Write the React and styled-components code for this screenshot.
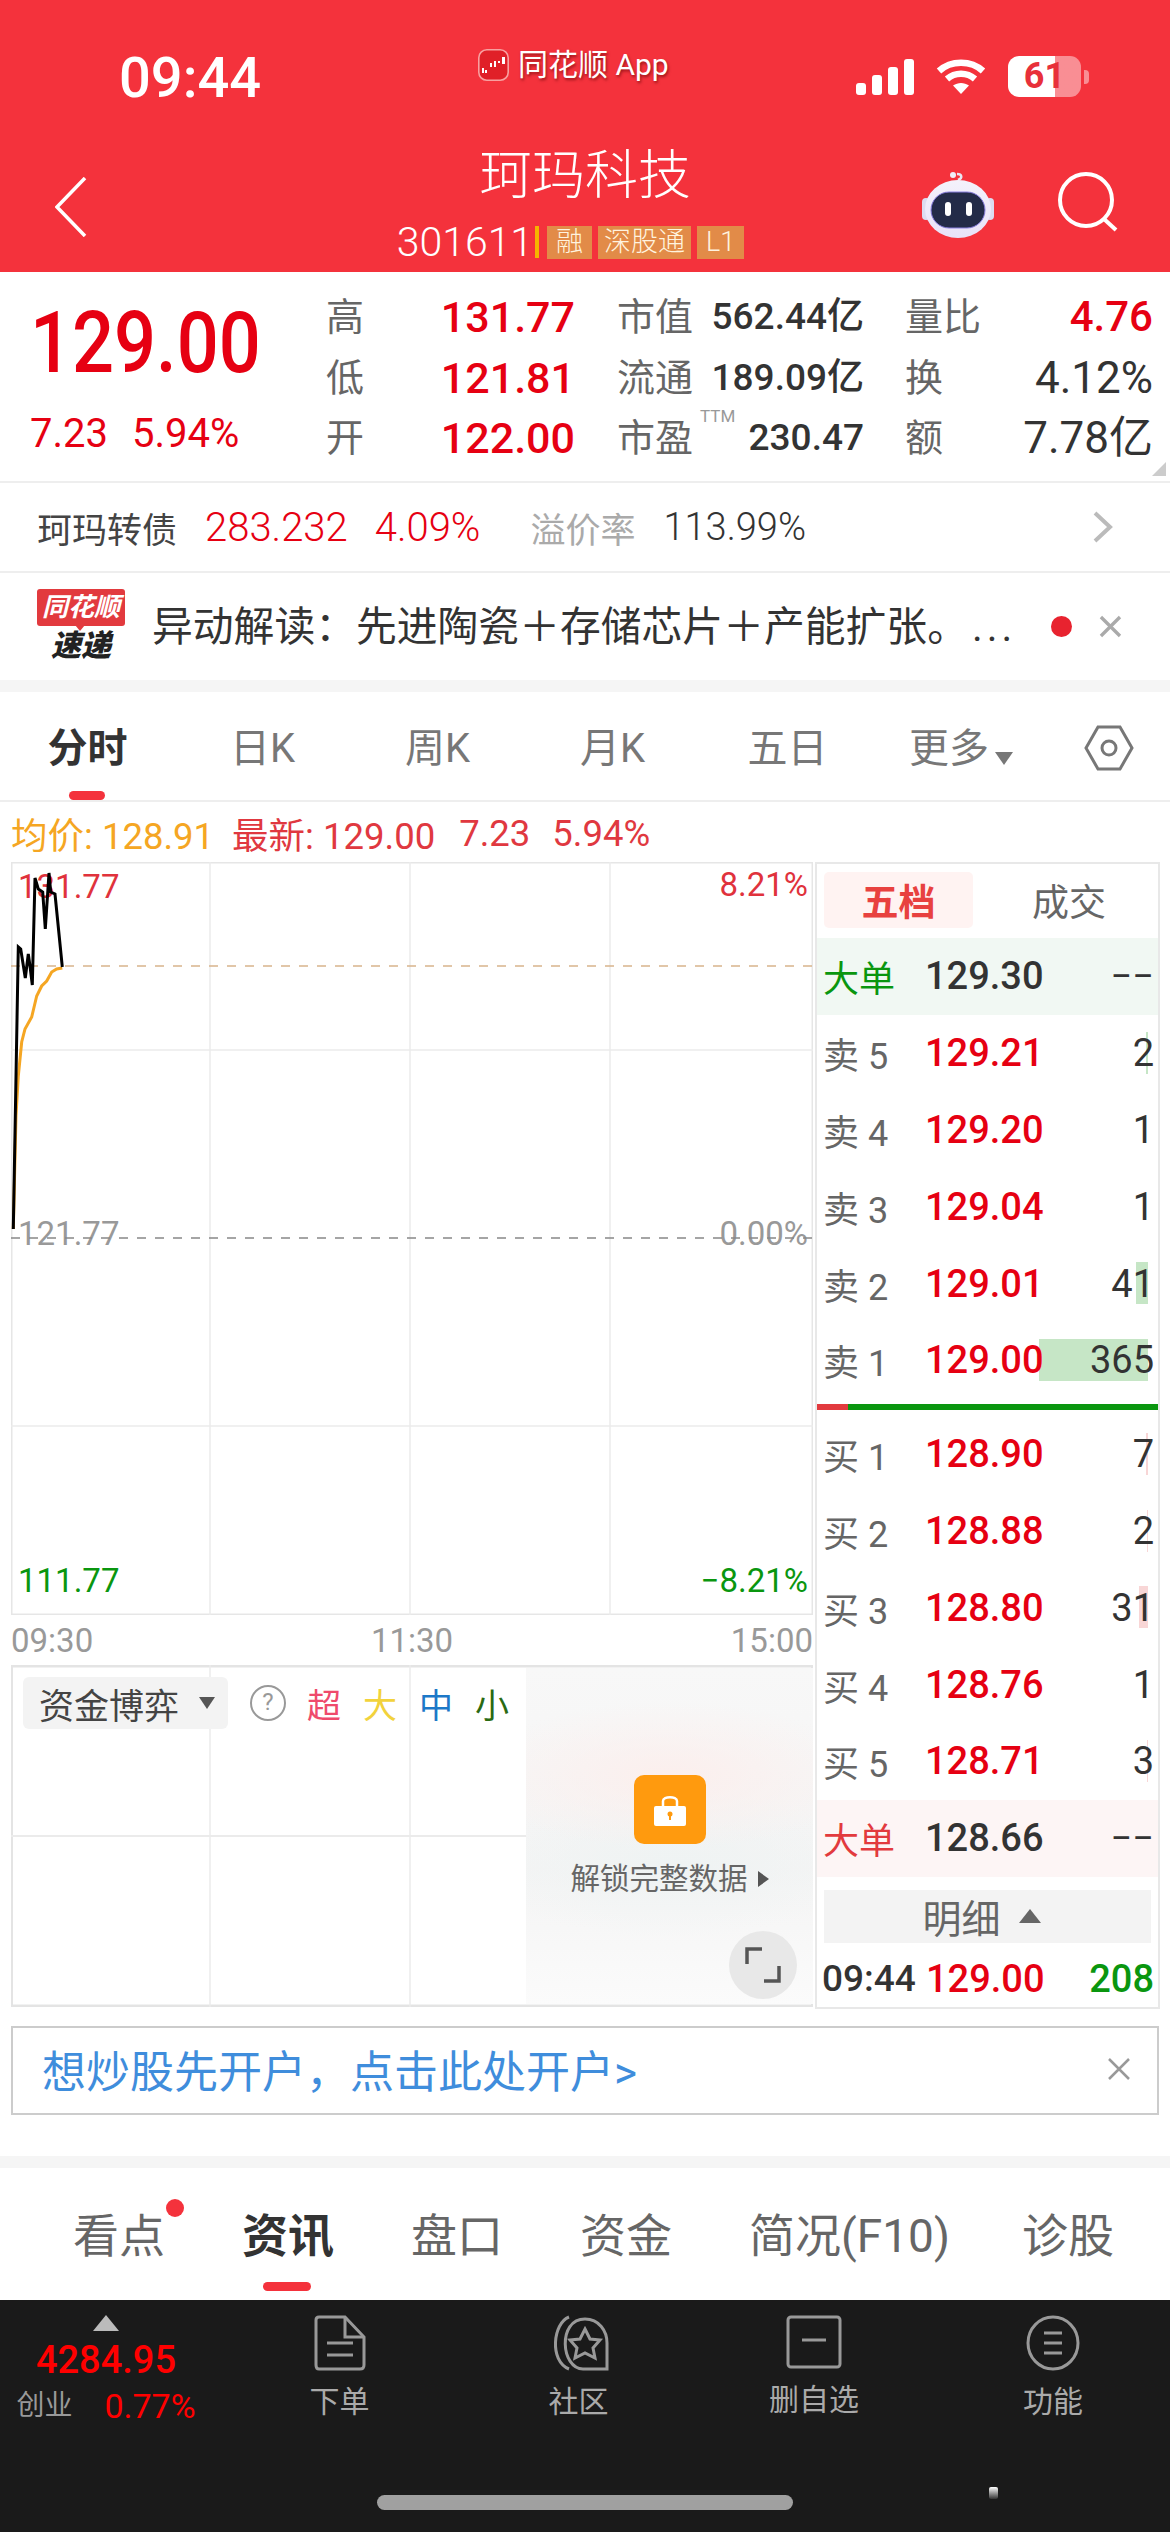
import React from 'react';
import styled, { createGlobalStyle } from 'styled-components';

const FONT = `Roboto, "Noto Sans CJK SC", sans-serif`;
const RED = '#e60012';
const GREEN = '#0a960f';

const GlobalStyle = createGlobalStyle`
  html, body { margin: 0; padding: 0; background: #fff; }
  body { font-family: ${FONT}; }
  * { box-sizing: border-box; }
`;

const Page = styled.div`
  width: 1170px;
  height: 2532px;
  display: flex;
  flex-direction: column;
  overflow: hidden;
  background: #fff;
  color: #333;
`;

/* red header */
const Header = styled.header`
  height: 272px;
  flex: none;
  background: #f4323c;
  color: #fff;
  display: flex;
  flex-direction: column;
`;

const StatusBar = styled.div`
  height: 134px;
  padding: 47px 80px 0 119px;
  display: flex;
  align-items: flex-start;
`;

const Clock = styled.div`
  width: 359px;
  font-size: 56px;
  line-height: 62px;
  font-weight: 500;
`;

const AppBadge = styled.div`
  display: flex;
  align-items: center;
  gap: 9px;
  width: 378px;
  margin-top: 1px;
  font-size: 30px;
  line-height: 34px;
  text-shadow: 1px 2px 3px rgba(90, 0, 0, 0.6);
`;

const StatusIcons = styled.div`
  display: flex;
  align-items: center;
  gap: 22px;
  margin-top: 9px;
`;

const Battery = styled.div`
  position: relative;
  width: 73px;
  height: 41px;
  border-radius: 11px;
  overflow: hidden;
  background: linear-gradient(90deg, #fff 0 64%, rgba(255, 255, 255, 0.45) 64% 100%);
  color: #e8303a;
  font-size: 36px;
  font-weight: 700;
  line-height: 41px;
  text-align: center;
`;

const BatteryTip = styled.div`
  width: 5px;
  height: 14px;
  margin-left: -19px;
  border-radius: 0 4px 4px 0;
  background: rgba(255, 255, 255, 0.45);
`;

const NavBar = styled.div`
  position: relative;
  flex: 1;
  display: flex;
  justify-content: space-between;
  padding: 43px 51px 0 55px;
`;

const NavRight = styled.div`
  display: flex;
  gap: 63px;
  margin-top: -5px;
`;

const TitleBlock = styled.div`
  position: absolute;
  left: 0;
  right: 0;
  top: 8px;
  display: flex;
  flex-direction: column;
  align-items: center;
`;

const Title = styled.div`
  font-size: 53px;
  line-height: 68px;
  font-weight: 300;
`;

const CodeLine = styled.div`
  display: flex;
  align-items: center;
  height: 34px;
  margin-top: 15px;
  margin-left: -29px;
  gap: 6px;
`;

const Code = styled.span`
  font-size: 41px;
  font-weight: 300;
  border-right: 4px solid #f5b400;
  line-height: 32px;
  padding-right: 2px;
  margin-right: 2px;
`;

const Tag = styled.span`
  background: #e28b48;
  color: #fff3df;
  height: 33px;
  padding: 0 ${(p) => p.$pad || 9}px;
  font-size: 27px;
  line-height: 33px;
  font-weight: 300;
`;

/* quote block */
const Quote = styled.section`
  position: relative;
  height: 211px;
  flex: none;
  display: flex;
  border-bottom: 2px solid #eee;
`;

const QuoteLeft = styled.div`
  width: 326px;
  padding-left: 30px;
  display: flex;
  flex-direction: column;
`;

const BigPrice = styled.div`
  font-size: 85px;
  font-weight: 500;
  line-height: 80px;
  color: ${RED};
  margin-top: 31px;
  width: 240px;
  white-space: nowrap;
  transform: scaleX(0.87);
  transform-origin: left center;
`;

const ChangeLine = styled.div`
  display: flex;
  gap: 24px;
  margin-top: 29px;
  color: ${RED};
  font-size: 40px;
  line-height: 44px;
`;

const StatGrid = styled.div`
  display: grid;
  grid-template-columns: 60px 189px 42px 80px 167px 41px 80px 168px;
  grid-auto-rows: 60.5px;
  padding-top: 15px;
  align-items: center;
`;

const StatLabel = styled.div`
  position: relative;
  grid-column: ${(p) => p.$col};
  font-size: 38px;
  line-height: 44px;
  color: #666;
  white-space: nowrap;
`;

const StatValue = styled.div`
  grid-column: ${(p) => p.$col};
  text-align: right;
  font-size: ${(p) => p.$size || 38}px;
  font-weight: ${(p) => p.$weight || 400};
  line-height: 44px;
  color: ${(p) => p.$color || '#333'};
  white-space: nowrap;
`;

const Ttm = styled.span`
  position: absolute;
  left: 83px;
  top: -9px;
  font-size: 17px;
  line-height: 18px;
  color: #999;
`;

const CornerMark = styled.div`
  position: absolute;
  right: 4px;
  bottom: 5px;
  width: 0;
  height: 0;
  border-left: 14px solid transparent;
  border-bottom: 14px solid #ccc;
`;

/* bond row */
const BondRow = styled.section`
  height: 90px;
  flex: none;
  display: flex;
  align-items: center;
  padding: 0 57px 0 37px;
  font-size: 36px;
  border-bottom: 2px solid #eee;
`;

const BondName = styled.span`
  width: 168px;
  font-size: 35px;
  color: #444;
`;

const BondNum = styled.span`
  color: ${(p) => p.$color || RED};
  font-size: ${(p) => p.$size || 40}px;
  font-weight: 300;
  margin-right: ${(p) => p.$gap || 0}px;
`;

const BondLabel = styled.span`
  color: #aaa;
  font-size: 35px;
  margin-right: 28px;
`;

const Spacer = styled.div`
  flex: 1;
`;

/* news row */
const NewsRow = styled.section`
  height: 107px;
  flex: none;
  display: flex;
  align-items: center;
  padding: 0 48px 0 37px;
`;

const NewsBadge = styled.div`
  width: 88px;
  margin-right: 27px;
  margin-top: -2px;
  display: flex;
  flex-direction: column;
  align-items: center;
`;

const NewsBadgeTop = styled.div`
  position: relative;
  width: 88px;
  height: 37px;
  background: #e23a3e;
  color: #fff;
  border-radius: 3px;
  font-size: 26px;
  line-height: 36px;
  font-weight: 700;
  font-style: italic;
  text-align: center;
  white-space: nowrap;
  &::after {
    content: '';
    position: absolute;
    left: 38px;
    bottom: -5px;
    border-left: 5px solid transparent;
    border-right: 5px solid transparent;
    border-top: 6px solid #e23a3e;
  }
`;

const NewsBadgeBottom = styled.div`
  font-size: 30px;
  line-height: 32px;
  margin-top: 4px;
  font-weight: 900;
  font-style: italic;
  color: #222;
`;

const NewsText = styled.div`
  width: 868px;
  font-size: 40.8px;
  line-height: 50px;
  color: #333;
  white-space: nowrap;
`;

const NewsDots = styled.span`
  letter-spacing: 4px;
  margin-left: 4px;
`;

const NewsDot = styled.div`
  width: 21px;
  height: 21px;
  border-radius: 50%;
  background: #e8232f;
  margin-left: 35px;
  margin-right: 27px;
`;

const GreyStrip = styled.div`
  height: ${(p) => p.$h}px;
  flex: none;
  margin-top: ${(p) => p.$top || 0}px;
  background: #f5f5f5;
`;

/* period tabs */
const PeriodTabs = styled.nav`
  height: 110px;
  flex: none;
  display: grid;
  grid-template-columns: repeat(5, 175px) 184px 1fr;
  border-bottom: 2px solid #eee;
`;

const PeriodTab = styled.div`
  position: relative;
  display: flex;
  justify-content: center;
  align-items: flex-start;
  padding-top: 30px;
  padding-right: ${(p) => p.$padRight || 0}px;
  font-size: 40px;
  line-height: 54px;
  font-weight: ${(p) => (p.$active ? 700 : 400)};
  color: ${(p) => (p.$active ? '#333' : '#777')};
`;

const TabMark = styled.i`
  position: absolute;
  left: ${(p) => p.$left}px;
  bottom: 0;
  width: ${(p) => p.$width}px;
  height: 9px;
  border-radius: 5px;
  background: #f4323c;
`;

const MoreArrow = styled.i`
  align-self: center;
  margin: 0 0 6px 6px;
  border-left: 9px solid transparent;
  border-right: 9px solid transparent;
  border-top: 13px solid #777;
`;

const SettingCell = styled.div`
  padding: 33px 0 0 25px;
`;

/* info line */
const InfoLine = styled.div`
  height: 60px;
  flex: none;
  display: flex;
  align-items: center;
  padding: 2px 0 0 11px;
  font-size: 36.5px;
  color: #e03840;
`;

const InfoPart = styled.span`
  color: ${(p) => p.$color || 'inherit'};
  margin-right: ${(p) => p.$gap || 0}px;
  white-space: nowrap;
`;

/* chart + order book */
const Board = styled.div`
  height: 1147px;
  flex: none;
  display: flex;
  padding-left: 11px;
`;

const ChartColumn = styled.div`
  width: 802px;
  display: flex;
  flex-direction: column;
`;

const ChartFrame = styled.div`
  position: relative;
  width: 802px;
  height: ${(p) => p.$h}px;
  flex: none;
  overflow: hidden;
`;

const ChartSvg = styled.svg`
  position: absolute;
  left: 0;
  top: 0;
  display: block;
`;

const ChartLabel = styled.span`
  position: absolute;
  ${(p) => (p.$right ? 'right: 5px;' : 'left: 7px;')}
  top: ${(p) => p.$top}px;
  font-size: 33px;
  line-height: 40px;
  color: ${(p) => p.$color};
`;

const Axis = styled.div`
  height: 50px;
  flex: none;
  display: flex;
  justify-content: space-between;
  align-items: center;
  font-size: 33px;
  color: #999;
`;

const FundToolbar = styled.div`
  position: absolute;
  left: 12px;
  top: 12px;
  display: flex;
  align-items: center;
`;

const FundSelect = styled.div`
  width: 205px;
  height: 52px;
  padding-left: 16px;
  display: flex;
  align-items: center;
  gap: 20px;
  background: #f3f3f3;
  border-radius: 6px;
  font-size: 35px;
  color: #444;
  white-space: nowrap;
  margin-right: 22px;
`;

const SmallDown = styled.i`
  border-left: 8px solid transparent;
  border-right: 8px solid transparent;
  border-top: 12px solid #555;
`;

const FundKey = styled.span`
  width: 56px;
  text-align: center;
  font-size: 34px;
  color: ${(p) => p.$color};
`;

const HelpMark = styled.div`
  width: 36px;
  height: 36px;
  border-radius: 50%;
  border: 2.5px solid #999;
  color: #999;
  font-size: 24px;
  line-height: 31px;
  text-align: center;
  margin-right: 10px;
`;

const LockOverlay = styled.div`
  position: absolute;
  right: 0;
  top: 3px;
  bottom: 3px;
  width: 287px;
  background:
    radial-gradient(ellipse 70% 22% at 50% 32%, rgba(252, 238, 236, 0.9), transparent),
    radial-gradient(ellipse 70% 22% at 50% 58%, rgba(238, 243, 243, 0.9), transparent),
    linear-gradient(180deg, #f8f8f8, #f4f4f4 60%, #fbfbfb);
  display: flex;
  flex-direction: column;
  align-items: center;
  padding-top: 107px;
`;

const LockBox = styled.div`
  width: 72px;
  height: 69px;
  border-radius: 10px;
  background: #ff9a0e;
  display: flex;
  align-items: center;
  justify-content: center;
`;

const LockText = styled.div`
  display: flex;
  align-items: center;
  gap: 10px;
  margin-top: 17px;
  font-size: 29.5px;
  line-height: 36px;
  color: #666;
  white-space: nowrap;
`;

const SmallRight = styled.i`
  border-top: 8px solid transparent;
  border-bottom: 8px solid transparent;
  border-left: 11px solid #555;
`;

const ExpandBtn = styled.div`
  position: absolute;
  right: 16px;
  bottom: 8px;
  width: 68px;
  height: 68px;
  border-radius: 50%;
  background: #e8e8e8;
  display: flex;
  align-items: center;
  justify-content: center;
`;

/* order book */
const Book = styled.aside`
  width: 345px;
  margin-left: 2px;
  height: 1147px;
  flex: none;
  border: 2px solid #e8e8e8;
  display: flex;
  flex-direction: column;
`;

const BookTabs = styled.div`
  height: 74px;
  flex: none;
  padding: 8px 0 0 7px;
  display: flex;
`;

const BookTab = styled.div`
  width: ${(p) => (p.$active ? 155 : 185)}px;
  height: 56px;
  margin-left: ${(p) => (p.$active ? 0 : 7)}px;
  display: flex;
  justify-content: center;
  align-items: center;
  border-radius: 5px;
  font-size: 37px;
  font-weight: ${(p) => (p.$active ? 700 : 400)};
  color: ${(p) => (p.$active ? '#e8413f' : '#666')};
  background: ${(p) => (p.$active ? '#fff3f2' : 'transparent')};
`;

const BookRow = styled.div`
  position: relative;
  height: 76.8px;
  flex: none;
  display: grid;
  grid-template-columns: 102px 130px 1fr;
  align-items: center;
  padding: 0 4px 0 6px;
  background: ${(p) => p.$bg || 'transparent'};
`;

const RowLabel = styled.span`
  font-size: 36px;
  color: ${(p) => p.$color || '#666'};
  white-space: nowrap;
`;

const RowPrice = styled.span`
  position: relative;
  z-index: 1;
  font-size: 38px;
  font-weight: 500;
  color: ${(p) => p.$color || RED};
`;

const RowQty = styled.span`
  position: relative;
  z-index: 1;
  justify-self: end;
  font-size: 38px;
  color: ${(p) => p.$color || '#333'};
`;

const VolumeBar = styled.i`
  position: absolute;
  right: 10px;
  top: 17px;
  height: 42px;
  background: ${(p) => p.$color};
`;

const SplitBar = styled.div`
  height: 17px;
  flex: none;
  padding-top: 5px;
`;

const SplitFill = styled.div`
  height: 6px;
  background: linear-gradient(90deg, #e23a3e 0 31px, ${GREEN} 31px);
`;

const DetailBtn = styled.div`
  height: 53px;
  margin: 13px 7px 0;
  flex: none;
  background: #f3f3f3;
  display: flex;
  align-items: center;
  justify-content: center;
  gap: 18px;
  font-size: 39px;
  color: #666;
  padding-right: 12px;
`;

const UpMark = styled.i`
  border-left: 11px solid transparent;
  border-right: 11px solid transparent;
  border-bottom: 14px solid #666;
`;

const TradeRow = styled.div`
  flex: 1;
  display: flex;
  align-items: center;
  padding: 8px 4px 0 5px;
  font-weight: 500;
  white-space: nowrap;
`;

const TradeTime = styled.span`
  color: #333;
  width: 104px;
  font-size: 37px;
`;

const TradePrice = styled.span`
  color: ${RED};
  flex: 1;
  font-size: 38px;
`;

const TradeQty = styled.span`
  color: ${GREEN};
  font-size: 38px;
`;

/* open-account banner */
const AccountBanner = styled.div`
  height: 89px;
  flex: none;
  margin: 17px 11px 0;
  border: 2px solid #ccc;
  display: flex;
  align-items: center;
  justify-content: space-between;
  padding: 0 26px 4px 29px;
  font-size: 44px;
  color: #3f8ddc;
  white-space: nowrap;
`;

/* content tabs */
const ContentTabs = styled.nav`
  position: relative;
  height: 132px;
  flex: none;
  display: flex;
  padding: 37px 0 0 73px;
`;

const ContentTab = styled.div`
  position: relative;
  margin-right: ${(p) => p.$gap}px;
  font-size: 46px;
  line-height: 62px;
  font-weight: ${(p) => (p.$active ? 700 : 400)};
  color: ${(p) => (p.$active ? '#333' : '#666')};
  white-space: nowrap;
`;

const RedDot = styled.i`
  position: absolute;
  right: -19px;
  top: -6px;
  width: 18px;
  height: 18px;
  border-radius: 50%;
  background: #f4323c;
`;

const ContentMark = styled.i`
  position: absolute;
  left: 21px;
  top: 77px;
  width: 48px;
  height: 9px;
  border-radius: 5px;
  background: #f4323c;
`;

/* dark bottom bar */
const BottomBar = styled.footer`
  position: relative;
  flex: 1;
  background: #1a1a1a;
  display: grid;
  grid-template-columns: 212px 240px 240px 236px 1fr;
  padding-top: 15px;
  align-items: start;
`;

const IndexCell = styled.div`
  display: flex;
  flex-direction: column;
  align-items: center;
`;

const IndexUp = styled.i`
  border-left: 13px solid transparent;
  border-right: 13px solid transparent;
  border-bottom: 16px solid #bbb;
`;

const IndexValue = styled.div`
  font-size: 38px;
  line-height: 44px;
  font-weight: 500;
  color: #f00;
  margin-top: 7px;
`;

const IndexLine = styled.div`
  display: flex;
  align-items: center;
  gap: 32px;
  margin-top: 4px;
  font-size: 34px;
  line-height: 40px;
  color: #f00;
  white-space: nowrap;
`;

const IndexName = styled.span`
  font-size: 28px;
  color: #999;
`;

const NavItem = styled.div`
  display: flex;
  flex-direction: column;
  align-items: center;
  color: #aaa;
  font-size: 30px;
  line-height: 36px;
  gap: 13px;
  margin-left: ${(p) => p.$shift || 0}px;
`;

const HomeBar = styled.div`
  position: absolute;
  left: 377px;
  top: 195px;
  width: 416px;
  height: 15px;
  border-radius: 8px;
  background: #a0a0a0;
`;

const Speck = styled.i`
  position: absolute;
  left: 989px;
  top: 187px;
  width: 9px;
  height: 12px;
  border-radius: 2px;
  background: linear-gradient(180deg, #fff, #333);
`;

const BLACK_LINE = '2.3,367 7.3,85 9.7,87 14.3,116 17.3,92 19,104 21.3,123 24,16 27.3,27 31.7,30 34.3,67 38,11 39.7,30 44,32 51.3,105';
const AVG_LINE = '2.3,367 5,254 7.3,214 10.7,180 14,167 20.7,155 25.7,134 30.7,124 35.7,119 40.7,110 45.7,107 51.3,106';

const askRows = [
  ['卖 5', '129.21', '2', 2],
  ['卖 4', '129.20', '1', 0],
  ['卖 3', '129.04', '1', 0],
  ['卖 2', '129.01', '41', 12],
  ['卖 1', '129.00', '365', 109],
];

const bidRows = [
  ['买 1', '128.90', '7', 2],
  ['买 2', '128.88', '2', 1],
  ['买 3', '128.80', '31', 9],
  ['买 4', '128.76', '1', 0],
  ['买 5', '128.71', '3', 1],
];

const Logo = () => (
  <svg width="31" height="32" viewBox="0 0 31 32">
    <rect x="0.8" y="0.8" width="29.4" height="30.4" rx="8" fill="#e02028" stroke="#f8a0a0" strokeWidth="1.6" />
    <g fill="#fff">
      <rect x="4" y="19" width="2" height="5" />
      <rect x="7" y="21" width="2" height="3" />
      <rect x="12" y="14" width="2" height="4" />
      <rect x="16" y="12" width="2" height="6" />
      <rect x="20" y="12" width="2" height="2" />
      <rect x="24" y="8" width="3" height="7" />
    </g>
  </svg>
);

const SignalIcon = () => (
  <svg width="58" height="36" viewBox="0 0 58 36" fill="#fff">
    <rect x="0" y="24" width="10" height="12" rx="3" />
    <rect x="16" y="16" width="10" height="20" rx="3" />
    <rect x="32" y="8" width="10" height="28" rx="3" />
    <rect x="48" y="0" width="10" height="36" rx="3" />
  </svg>
);

const WifiIcon = () => (
  <svg width="50" height="37" viewBox="0 0 50 37" fill="none" stroke="#fff" strokeWidth="6.5">
    <path d="M3 13 C15 2 35 2 47 13" />
    <path d="M11 21 C19 14 31 14 39 21" />
    <path d="M25 36 L17 27.5 C22 24 28 24 33 27.5 Z" fill="#fff" stroke="none" />
  </svg>
);

const BackIcon = () => (
  <svg width="32" height="60" viewBox="0 0 32 60" fill="none" stroke="#fff" strokeWidth="3.5">
    <path d="M30 1 L2 30 L30 59" />
  </svg>
);

const RobotIcon = () => (
  <svg width="72" height="66" viewBox="0 0 72 66">
    <defs>
      <linearGradient id="shell" x1="0" y1="0" x2="0" y2="1">
        <stop offset="0" stopColor="#f4f2fb" />
        <stop offset="1" stopColor="#e8e2f8" />
      </linearGradient>
    </defs>
    <path d="M36 8 C41 6 40 2 35 2" fill="none" stroke="#e8e6f2" strokeWidth="2.5" />
    <circle cx="31" cy="3" r="3" fill="#f0eef8" />
    <rect x="0" y="26" width="8" height="22" rx="4" fill="#dcdcf0" />
    <rect x="64" y="26" width="8" height="22" rx="4" fill="#dcdcf0" />
    <ellipse cx="36" cy="37" rx="33" ry="29" fill="url(#shell)" />
    <rect x="9" y="20" width="54" height="36" rx="18" fill="#232b48" stroke="#8a80e0" strokeWidth="1" />
    <rect x="23" y="30" width="6" height="14" rx="3" fill="#fff" />
    <rect x="44" y="30" width="6" height="14" rx="3" fill="#fff" />
  </svg>
);

const SearchIcon = () => (
  <svg width="62" height="60" viewBox="0 0 62 60" fill="none" stroke="#fff" strokeWidth="4">
    <circle cx="29" cy="28" r="26" />
    <path d="M47 47 L59 58" />
  </svg>
);

const ChevronIcon = () => (
  <svg width="20" height="32" viewBox="0 0 20 32" fill="none" stroke="#bbb" strokeWidth="4">
    <path d="M2 2 L17 16 L2 30" />
  </svg>
);

const CloseIcon = ({ size, color, width }) => (
  <svg width={size} height={size} viewBox="0 0 24 24" fill="none" stroke={color} strokeWidth={width}>
    <path d="M2 2 L22 22 M22 2 L2 22" />
  </svg>
);

const HexIcon = () => (
  <svg width="50" height="46" viewBox="0 0 50 46" fill="none" stroke="#777" strokeWidth="3">
    <path d="M14 2 H36 L48 23 L36 44 H14 L2 23 Z" />
    <circle cx="25" cy="23" r="7" />
  </svg>
);

const LockIcon = () => (
  <svg width="34" height="34" viewBox="0 0 34 34">
    <path d="M10 14 V8 C10 3 24 3 24 8 V14" fill="none" stroke="#fff" strokeWidth="2.5" />
    <rect x="1" y="13" width="32" height="20" rx="2" fill="#fff" />
    <circle cx="17" cy="21" r="2.5" fill="#ff9a0e" />
    <rect x="16" y="22" width="2" height="5" fill="#ff9a0e" />
  </svg>
);

const ExpandIcon = () => (
  <svg width="36" height="36" viewBox="0 0 36 36" fill="none" stroke="#555" strokeWidth="3.5">
    <path d="M2 17 V2 H17" />
    <path d="M34 19 V34 H19" />
  </svg>
);

const DocIcon = () => (
  <svg width="52" height="56" viewBox="0 0 52 56" fill="none" stroke="#999" strokeWidth="3">
    <path d="M5 2 H31 L50 22 V50 Q50 54 46 54 H5 Q2 54 2 50 V5 Q2 2 5 2 Z" />
    <path d="M31 2 V22 H50" />
    <path d="M13 28 H39 M13 40 H39" />
  </svg>
);

const CommunityIcon = () => (
  <svg width="60" height="56" viewBox="0 0 60 56" fill="none" stroke="#999" strokeWidth="3">
    <path d="M20 2 C4 8 0 46 20 54" />
    <path d="M58 54 H34 C12 54 8 4 36 4 C50 4 58 16 58 28 Z" />
    <path d="M36 14 L41 24 L51 25 L44 33 L46 43 L36 38 L26 43 L28 33 L21 25 L31 24 Z" />
  </svg>
);

const MinusBoxIcon = () => (
  <svg width="56" height="54" viewBox="0 0 56 54" fill="none" stroke="#999" strokeWidth="3">
    <rect x="2" y="2" width="52" height="50" rx="3" />
    <path d="M16 25 H40" />
  </svg>
);

const MenuIcon = () => (
  <svg width="54" height="56" viewBox="0 0 54 56" fill="none" stroke="#999" strokeWidth="3">
    <ellipse cx="27" cy="28" rx="25" ry="26" />
    <path d="M18 18 H36 M18 28 H36 M18 38 H36" />
  </svg>
);

const PriceChart = () => (
  <ChartSvg width="802" height="753">
    <rect x="0.5" y="0.5" width="801" height="752" fill="none" stroke="#e6e6e6" strokeWidth="2" />
    {[199, 399, 599].map((x) => (
      <line key={x} x1={x} x2={x} y1="0" y2="753" stroke="#ebebeb" strokeWidth="1.5" />
    ))}
    {[188, 564].map((y) => (
      <line key={y} x1="0" x2="802" y1={y} y2={y} stroke="#ebebeb" strokeWidth="1.5" />
    ))}
    <line x1="0" x2="802" y1="104" y2="104" stroke="#d8b48c" strokeWidth="1.5" strokeDasharray="9 9" />
    <line x1="0" x2="802" y1="376" y2="376" stroke="#888" strokeWidth="1.5" strokeDasharray="9 9" />
    <polyline points={AVG_LINE} fill="none" stroke="#f5a623" strokeWidth="3" />
    <polyline points={BLACK_LINE} fill="none" stroke="#000" strokeWidth="3" />
  </ChartSvg>
);

const FundGrid = () => (
  <ChartSvg width="802" height="342">
    <rect x="0.5" y="1" width="801" height="340" fill="none" stroke="#e4e4e4" strokeWidth="3" />
    {[199, 399].map((x) => (
      <line key={x} x1={x} x2={x} y1="0" y2="342" stroke="#ebebeb" strokeWidth="1.5" />
    ))}
    <line x1="0" x2="515" y1="171" y2="171" stroke="#ebebeb" strokeWidth="2" />
  </ChartSvg>
);

const BookRows = ({ rows, barColor }) =>
  rows.map(([label, price, qty, bar]) => (
    <BookRow key={label}>
      <RowLabel>{label}</RowLabel>
      <RowPrice>{price}</RowPrice>
      <RowQty>{qty}</RowQty>
      {bar > 0 && <VolumeBar $color={barColor} style={{ width: bar }} />}
    </BookRow>
  ));

const App = () => (
  <Page>
    <GlobalStyle />
    <Header>
      <StatusBar>
        <Clock>09:44</Clock>
        <AppBadge>
          <Logo />
          同花顺 App
        </AppBadge>
        <StatusIcons>
          <SignalIcon />
          <WifiIcon />
          <Battery>61</Battery>
          <BatteryTip />
        </StatusIcons>
      </StatusBar>
      <NavBar>
        <TitleBlock>
          <Title>珂玛科技</Title>
          <CodeLine>
            <Code>301611</Code>
            <Tag>融</Tag>
            <Tag $pad={6}>深股通</Tag>
            <Tag $pad={9}>L1</Tag>
          </CodeLine>
        </TitleBlock>
        <BackIcon />
        <NavRight>
          <RobotIcon />
          <SearchIcon />
        </NavRight>
      </NavBar>
    </Header>

    <Quote>
      <QuoteLeft>
        <BigPrice>129.00</BigPrice>
        <ChangeLine>
          <span>7.23</span>
          <span>5.94%</span>
        </ChangeLine>
      </QuoteLeft>
      <StatGrid>
        <StatLabel $col={1}>高</StatLabel>
        <StatValue $col={2} $size={43} $weight={500} $color={RED}>131.77</StatValue>
        <StatLabel $col={4}>市值</StatLabel>
        <StatValue $col={5} $size={37} $weight={500}>562.44亿</StatValue>
        <StatLabel $col={7}>量比</StatLabel>
        <StatValue $col={8} $size={42} $weight={500} $color={RED}>4.76</StatValue>

        <StatLabel $col={1}>低</StatLabel>
        <StatValue $col={2} $size={43} $weight={500} $color={RED}>121.81</StatValue>
        <StatLabel $col={4}>流通</StatLabel>
        <StatValue $col={5} $size={37} $weight={500}>189.09亿</StatValue>
        <StatLabel $col={7}>换</StatLabel>
        <StatValue $col={8} $size={44}>4.12%</StatValue>

        <StatLabel $col={1}>开</StatLabel>
        <StatValue $col={2} $size={43} $weight={500} $color={RED}>122.00</StatValue>
        <StatLabel $col={4}>市盈<Ttm>TTM</Ttm></StatLabel>
        <StatValue $col={5} $size={37} $weight={500}>230.47</StatValue>
        <StatLabel $col={7}>额</StatLabel>
        <StatValue $col={8} $size={44}>7.78亿</StatValue>
      </StatGrid>
      <CornerMark />
    </Quote>

    <BondRow>
      <BondName>珂玛转债</BondName>
      <BondNum $gap={27}>283.232</BondNum>
      <BondNum $gap={50}>4.09%</BondNum>
      <BondLabel>溢价率</BondLabel>
      <BondNum $color="#333" $size={38}>113.99%</BondNum>
      <Spacer />
      <ChevronIcon />
    </BondRow>

    <NewsRow>
      <NewsBadge>
        <NewsBadgeTop>同花顺</NewsBadgeTop>
        <NewsBadgeBottom>速递</NewsBadgeBottom>
      </NewsBadge>
      <NewsText>
        异动解读：先进陶瓷＋存储芯片＋产能扩张。
        <NewsDots>...</NewsDots>
      </NewsText>
      <NewsDot />
      <CloseIcon size={23} color="#aaa" width={3.5} />
    </NewsRow>
    <GreyStrip $h={12} />

    <PeriodTabs>
      <PeriodTab $active>
        分时
        <TabMark $left={69} $width={36} />
      </PeriodTab>
      <PeriodTab>日K</PeriodTab>
      <PeriodTab>周K</PeriodTab>
      <PeriodTab>月K</PeriodTab>
      <PeriodTab>五日</PeriodTab>
      <PeriodTab $padRight={12}>
        更多
        <MoreArrow />
      </PeriodTab>
      <SettingCell>
        <HexIcon />
      </SettingCell>
    </PeriodTabs>

    <InfoLine>
      <InfoPart $color="#f5a623" $gap={18}>均价: 128.91</InfoPart>
      <InfoPart $gap={24}>最新: 129.00</InfoPart>
      <InfoPart $gap={22}>7.23</InfoPart>
      <InfoPart>5.94%</InfoPart>
    </InfoLine>

    <Board>
      <ChartColumn>
        <ChartFrame $h={753}>
          <ChartLabel $top={5} $color="#e0323c">131.77</ChartLabel>
          <ChartLabel $right $top={3} $color="#e0323c">8.21%</ChartLabel>
          <ChartLabel $top={352} $color="#999">121.77</ChartLabel>
          <ChartLabel $right $top={352} $color="#999">0.00%</ChartLabel>
          <ChartLabel $top={699} $color={GREEN}>111.77</ChartLabel>
          <ChartLabel $right $top={699} $color={GREEN}>−8.21%</ChartLabel>
          <PriceChart />
        </ChartFrame>
        <Axis>
          <span>09:30</span>
          <span>11:30</span>
          <span>15:00</span>
        </Axis>
        <ChartFrame $h={342}>
          <FundGrid />
          <FundToolbar>
            <FundSelect>
              资金博弈
              <SmallDown />
            </FundSelect>
            <HelpMark>?</HelpMark>
            <FundKey $color="#ef4a6c">超</FundKey>
            <FundKey $color="#f2d23c">大</FundKey>
            <FundKey $color="#1c78c8">中</FundKey>
            <FundKey $color="#2a6a12">小</FundKey>
          </FundToolbar>
          <LockOverlay>
            <LockBox>
              <LockIcon />
            </LockBox>
            <LockText>
              解锁完整数据
              <SmallRight />
            </LockText>
          </LockOverlay>
          <ExpandBtn>
            <ExpandIcon />
          </ExpandBtn>
        </ChartFrame>
      </ChartColumn>

      <Book>
        <BookTabs>
          <BookTab $active>五档</BookTab>
          <BookTab>成交</BookTab>
        </BookTabs>
        <BookRow $bg="#f1f8f3">
          <RowLabel $color={GREEN}>大单</RowLabel>
          <RowPrice $color="#333">129.30</RowPrice>
          <RowQty>−−</RowQty>
        </BookRow>
        <BookRows rows={askRows} barColor="#c6e6c6" />
        <SplitBar>
          <SplitFill />
        </SplitBar>
        <BookRows rows={bidRows} barColor="#f8d6d6" />
        <BookRow $bg="#fdf5f5">
          <RowLabel $color="#e23a3e">大单</RowLabel>
          <RowPrice $color="#333">128.66</RowPrice>
          <RowQty>−−</RowQty>
        </BookRow>
        <DetailBtn>
          明细
          <UpMark />
        </DetailBtn>
        <TradeRow>
          <TradeTime>09:44</TradeTime>
          <TradePrice>129.00</TradePrice>
          <TradeQty>208</TradeQty>
        </TradeRow>
      </Book>
    </Board>

    <AccountBanner>
      想炒股先开户，点击此处开户&gt;
      <CloseIcon size={24} color="#999" width={2.5} />
    </AccountBanner>

    <GreyStrip $h={12} $top={41} />

    <ContentTabs>
      <ContentTab $gap={77}>看点<RedDot /></ContentTab>
      <ContentTab $active $gap={77}>
        资讯
        <ContentMark />
      </ContentTab>
      <ContentTab $gap={77}>盘口</ContentTab>
      <ContentTab $gap={77}>资金</ContentTab>
      <ContentTab $gap={72}>简况(F10)</ContentTab>
      <ContentTab $gap={0}>诊股</ContentTab>
    </ContentTabs>

    <BottomBar>
      <IndexCell>
        <IndexUp />
        <IndexValue>4284.95</IndexValue>
        <IndexLine>
          <IndexName>创业</IndexName>
          0.77%
        </IndexLine>
      </IndexCell>
      <NavItem $shift={15}>
        <DocIcon />
        下单
      </NavItem>
      <NavItem $shift={13}>
        <CommunityIcon />
        社区
      </NavItem>
      <NavItem $shift={8}>
        <MinusBoxIcon />
        删自选
      </NavItem>
      <NavItem $shift={8}>
        <MenuIcon />
        功能
      </NavItem>
      <HomeBar />
      <Speck />
    </BottomBar>
  </Page>
);

export default App;
